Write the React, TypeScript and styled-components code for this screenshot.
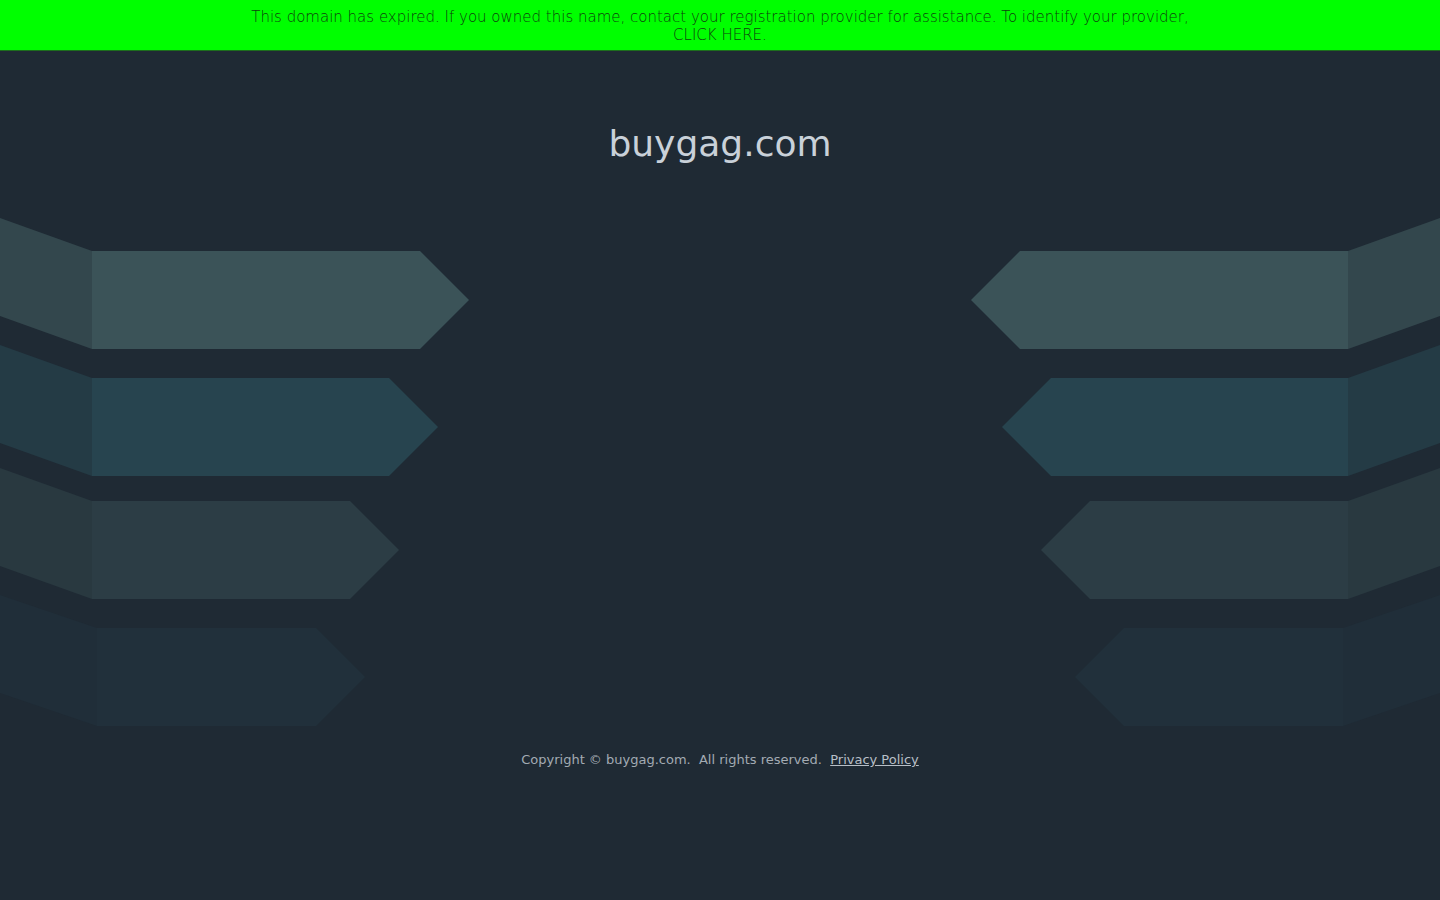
import React from 'react';
import styled, { createGlobalStyle } from 'styled-components';

const GlobalStyle = createGlobalStyle`
  html, body {
    margin: 0;
    padding: 0;
    background: #1f2a34;
  }
  body {
    font-family: "DejaVu Sans", "Liberation Sans", sans-serif;
  }
`;

const Page = styled.div`
  display: flex;
  flex-direction: column;
  min-height: 900px;
  background: #1f2a34;
`;

const Banner = styled.div`
  background: #00ff00;
  border-bottom: 1px solid #1d6e1d;
  color: #0e420e;
  font-size: 15px;
  font-weight: 200;
  line-height: 18px;
  text-align: center;
  padding: 8px 0 7px;
  height: 35px;
`;

const BannerLink = styled.a`
  color: #0e420e;
  text-decoration: none;
`;

const Title = styled.h1`
  margin: 0;
  padding: 71px 0 0;
  height: 130px;
  box-sizing: border-box;
  text-align: center;
  font-size: 36px;
  font-weight: normal;
  line-height: 44px;
  color: #c9d1d9;
`;

const Art = styled.svg`
  display: block;
  width: 100%;
  height: 530px;
  margin-top: 19px;
`;

const Footer = styled.footer`
  text-align: center;
  font-size: 13px;
  line-height: 18px;
  color: #a3abb3;
  padding-top: 21px;
`;

const FooterLink = styled.a`
  color: #b7bfc7;
  text-decoration: underline;
`;

interface ArrowSpec {
  top: number;
  tip: number;
  sideEnd: number;
  main: string;
  side: string;
}

// y values are relative to the svg top (page y 200)
const arrows: ArrowSpec[] = [
  { top: 51, tip: 469, sideEnd: 92, main: '#3b5358', side: '#33474d' },
  { top: 178, tip: 438, sideEnd: 92, main: '#27444f', side: '#243b45' },
  { top: 301, tip: 399, sideEnd: 92, main: '#2c3d45', side: '#293940' },
  { top: 428, tip: 365, sideEnd: 97, main: '#21303b', side: '#202e39' },
];

const H = 98;
const SLANT = 33;

const ArrowPair: React.FC<{ a: ArrowSpec }> = ({ a }) => {
  const half = H / 2;
  const bodyEnd = a.tip - half;
  const left = (
    <g>
      <polygon
        points={`0,${a.top - SLANT} ${a.sideEnd},${a.top} ${a.sideEnd},${a.top + H} 0,${a.top + H - SLANT}`}
        fill={a.side}
      />
      <polygon
        points={`${a.sideEnd},${a.top} ${bodyEnd},${a.top} ${a.tip},${a.top + half} ${bodyEnd},${a.top + H} ${a.sideEnd},${a.top + H}`}
        fill={a.main}
      />
    </g>
  );
  return (
    <g>
      {left}
      <g transform="translate(1440,0) scale(-1,1)">{left}</g>
    </g>
  );
};

const App: React.FC = () => {
  return (
    <>
      <GlobalStyle />
      <Page>
        <Banner>
          This domain has expired. If you owned this name, contact your registration provider for assistance. To identify your provider,
          <br />
          <BannerLink href="#">CLICK HERE.</BannerLink>
        </Banner>
        <Title>buygag.com</Title>
        <Art viewBox="0 0 1440 530" preserveAspectRatio="none">
          {arrows.map((a) => (
            <ArrowPair key={a.top} a={a} />
          ))}
        </Art>
        <Footer>
          Copyright © buygag.com.&nbsp; All rights reserved.&nbsp; <FooterLink href="#">Privacy Policy</FooterLink>
        </Footer>
      </Page>
    </>
  );
};

export default App;
